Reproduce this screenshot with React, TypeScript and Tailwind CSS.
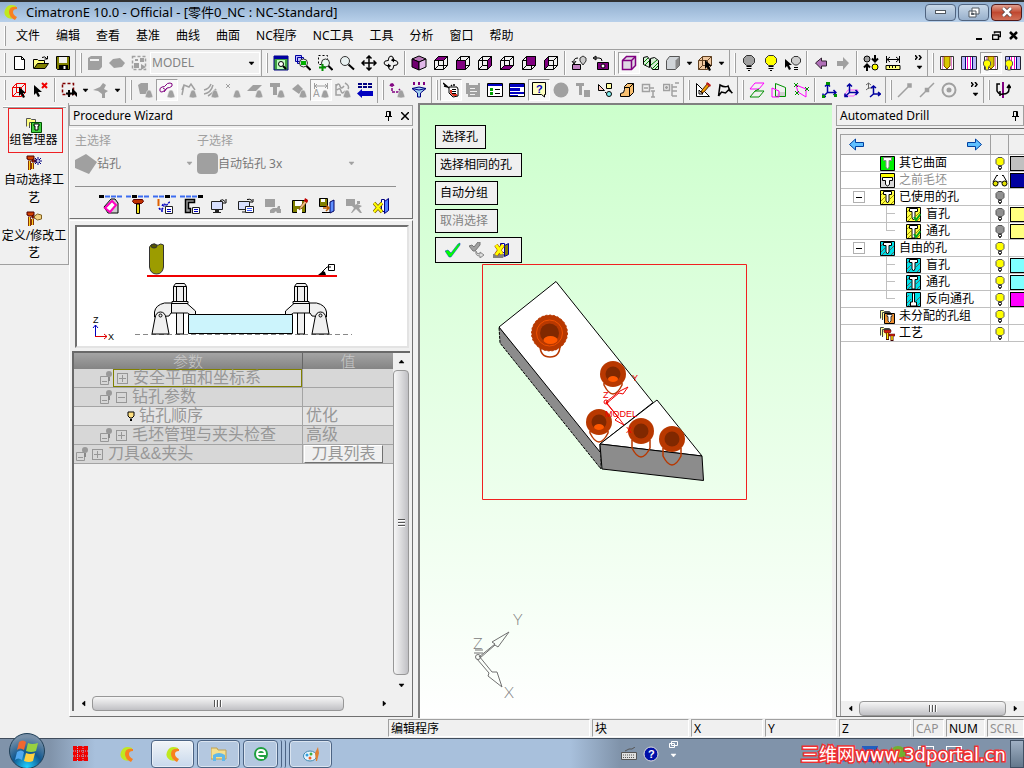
import React from 'react';

const G = '#a0a0a0';
const P = '#800080';

const cubeEdges = 'M1.5 5.5h9v9h-9zM5.5 1.5h9v9h-9zM1.5 5.5l4-4M10.5 5.5l4-4M10.5 14.5l4-4M1.5 14.5l4-4';
const cursor = <path d="M8 5v9l2-2 2 4 2-1-2-4h3z" fill="#000" />;
const cone = <path d="M8 15l2-6q2-2 4 0l2 6q-4 2-8 0z" fill={G} stroke="#f0f0f0" strokeWidth="0.500" />;
const glass = (
  <>
    <circle cx="8.500" cy="8" r="4" fill="#e8f8f0" stroke="#333" />
    <path d="M11.500 11l4 4" stroke="#000" strokeWidth="2" />
  </>
);

const Cube = ({ face }: { face: string }) => (
  <>
    <path d={cubeEdges} fill="none" stroke="#000" />
    <path d={face} fill={P} stroke="#000" />
  </>
);

const Bulb = ({ fill }: { fill: string }) => (
  <>
    <path d="M5.500 10.500L2.500 7.500V3.500L5.500.500h5l3 3v4l-3 3z" fill={fill} stroke="#333" />
    <path d="M5.500 11.500h5M5.500 13.500h5M7 15.500h2" stroke="#000" />
  </>
);

const Triad = ({ color }: { color: string }) => (
  <path d="M6.500 10.500V2M4 4.500L6.500 2 9 4.500M6.500 10.500H15M12.500 8l2.500 2.500-2.500 2.500M6.500 10.500L2 14.500M2 11.500v3h3" fill="none" stroke={color} strokeWidth="1.500" />
);

const Hole = ({ bulb }: { bulb?: boolean }) => (
  <>
    <path d="M1.500 1.500h13v13h-13z" fill="#fff" stroke="#333" />
    <path d="M3.500 2v12M12.500 2v12" stroke="#e080d0" />
    <path d="M5 1.500h6V11l-3 3-3-3z" fill="#d8c800" stroke="#804000" />
    {bulb && <path d="M.5 7l2-2h3l2 2v3l-2 2v3h-3v-3l-2-2z" fill="#ffff00" stroke="#555" />}
  </>
);

const Slot = ({ bulb }: { bulb?: boolean }) => (
  <>
    <path d="M.5 1.500h15v13H.5z" fill="#b8b8f8" stroke="#223" />
    <path d="M4 2h8v12H4z" fill="#fff" />
    <path d="M4.500 2v12M11.500 2v12" stroke="#000080" />
    <path d="M6.500 2v12M9.500 2v12" stroke="#ff00c0" />
    {bulb && <path d="M.5 7l2-2h3l2 2v3l-2 2v3h-3v-3l-2-2z" fill="#ffff00" stroke="#555" />}
  </>
);

const drawings: Record<string, React.ReactNode> = {
  new: <path d="M3.500 1.500h7l3 3v10h-10zM10.500 1.500v3h3" fill="#fff" stroke="#000" />,
  open: (
    <>
      <path d="M.5 13.500v-9h4l1 1h6v3" fill="#ffff80" stroke="#000" />
      <path d="M1 13.500l3.500-5h11L12 13.500z" fill="#808000" stroke="#000" />
      <path d="M9 2.500q3-2 5 1.500M14.500 1v3h-3" fill="none" stroke="#000" />
    </>
  ),
  save: (
    <>
      <path d="M1.500 1.500h13v13h-12l-1-1z" fill="#808000" stroke="#000" />
      <path d="M4 2h8v6H4z" fill="#f0f0f0" />
      <path d="M4 10h9v4H4z" fill="#000" />
      <path d="M9.500 11v3" stroke="#fff" strokeWidth="2" />
    </>
  ),
  part: <path d="M1 3l3-2h11v11l-3 3H1zM3 4h9v2H3z" fill={G} fillRule="evenodd" />,
  stock: <path d="M0 8l4-4 7-1 5 5-3 4-8 1z" fill={G} />,
  assembly: (
    <>
      <path d="M1.500 1.500h13v13h-13z" fill="none" stroke={G} strokeWidth="1.500" strokeDasharray="3 2" />
      <path d="M3 8h5v5H3zM9 3h4v4H9zM10 9l5 3-5 3zM4 4h3v2H4z" fill={G} />
    </>
  ),
  fitWindow: (
    <>
      <path d="M1 1h14v14H1z" fill="#40a040" stroke="#000080" />
      <path d="M1 1h14v3H1z" fill="#0000a0" />
      <path d="M4 5h8v9H4z" fill="#c0ffc0" />
      <circle cx="8" cy="9" r="2.500" fill="#fff" stroke="#000" />
      <path d="M10 11l3 3" stroke="#000" strokeWidth="2" />
    </>
  ),
  zoomDrag: (
    <>
      <path d="M.5.5h6v6h-6zM2.500 2.500h6v6h-6z" fill="#c0c0ff" stroke="#0000a0" />
      {glass}
      <path d="M6 6h5v4H6z" fill="#00b000" />
    </>
  ),
  zoomArea: (
    <>
      <path d="M1.500.500h9v9h-9z" fill="none" stroke="#000" strokeDasharray="2 2" />
      {glass}
      <path d="M5.500 9v7M2 12.500h7" stroke="#009000" strokeWidth="2" />
    </>
  ),
  zoom: (
    <>
      <circle cx="6" cy="6" r="4.500" fill="#e8f0f0" stroke="#333" />
      <path d="M9.500 9.500l5.500 5" stroke="#000" strokeWidth="2" />
    </>
  ),
  pan: <path d="M8 1v14M1 8h14M5.500 3.500L8 1l2.500 2.500M5.500 12.500L8 15l2.500-2.500M3.500 5.500L1 8l2.500 2.500M12.500 5.500L15 8l-2.500 2.500" fill="none" stroke="#000" strokeWidth="1.500" />,
  rotate: (
    <>
      <path d="M5 5.500q-4 0-4 2.500t5 3M11 10.500q4 0 4-2.500t-5-3M5.500 11q0 4 2.500 4t3-5M10.500 5q0-4-2.500-4t-3 5" fill="none" stroke="#000" />
      <path d="M5 8.500l3 2.500-3 2zM11 7.500L8 5l3-2zM8 6l3-2 2 2zM8 10l-3 2-2-2z" />
    </>
  ),
  iso: (
    <>
      <path d="M1 4l7-3 7 3-7 3z" fill="#b878b8" stroke="#000" />
      <path d="M1 4l7 3v8l-7-3z" fill="#700070" stroke="#000" />
      <path d="M15 4L8 7v8l7-3z" fill="#e0b8e8" stroke="#000" />
    </>
  ),
  top: <Cube face="M1.500 5.500l4-4h9l-4 4z" />,
  front: <Cube face="M1.500 5.500h9v9h-9z" />,
  right: <Cube face="M10.500 5.500l4-4v9l-4 4z" />,
  bottom: <Cube face="M1.500 14.500l4-4h9l-4 4z" />,
  back: <Cube face="M5.500 1.500h9v9h-9z" />,
  left: <Cube face="M1.500 5.500l4-4v9l-4 4z" />,
  turnView: (
    <>
      <path d="M1.500 9.500h8v5h-8z" fill="#c080c0" stroke="#000" />
      <path d="M9 3l3-2 3 2v3l-3 4-3-4z" fill="#ccc" stroke="#333" />
      <path d="M3 8q-1-5 4-5M1 6l2 3 2-3" fill="none" stroke="#000" />
    </>
  ),
  snapshot: (
    <>
      <path d="M4.500 7.500h11v7h-11z" fill={P} stroke="#000" />
      <circle cx="10" cy="11" r="2" fill="#fff" stroke="#000" />
      <path d="M1 3h5q3 0 3 3M3 1L0 3l3 2z" fill="none" stroke="#000" />
    </>
  ),
  shaded: (
    <>
      <path d="M1.500 5.500l4-4h9v9l-4 4h-9z" fill="#e0d8e4" stroke={P} strokeWidth="1.500" />
      <path d="M1.500 5.500h9v9M10.500 5.500l4-4" fill="none" stroke={P} strokeWidth="1.500" />
    </>
  ),
  section: (
    <>
      <path d="M.5 2.500l4-1 2 3v8l-2-1-4-2zM15.500 14.500v-9l-4-3-4 1v8l2 3z" fill="#d8f0d8" stroke="#000" />
      <path d="M9 14l6-6M8 10l6-5M12 14l3-3M1 7l4-4M2 10l4-4" stroke="#008000" />
    </>
  ),
  solid: (
    <>
      <path d="M1.500 5.500l3-4h10v9l-4 4h-9z" fill="#d0d4d8" stroke="#555" />
      <path d="M10.500 5.500l4-4v9l-4 4z" fill="#888" />
    </>
  ),
  wirePick: (
    <>
      <path d="M1.500 5.500l4-4h9v9l-4 4h-9z" fill="#f0c8a0" />
      <path d={cubeEdges} fill="none" stroke="#604020" />
      {cursor}
    </>
  ),
  bulbOff: <Bulb fill={G} />,
  bulbOn: <Bulb fill="#ffff00" />,
  bulbPick: (
    <>
      <path d="M0 4v9l2-2 2 4 2-1-2-4h3z" fill="#000" />
      <path d="M8.500 9l-2-2V4L9 1.500h4L15.500 4v3l-3 3h-3z" fill="#ccc" stroke="#333" />
      <path d="M9 12.500h4M9 14.500h4" stroke="#000" />
    </>
  ),
  prev: <path d="M2.500 8l6-5v3h5v5h-5v3z" fill="#b070b8" stroke="#302030" />,
  next: <path d="M14 8L8 2v4H2v5h6v4z" fill={G} />,
  swap: (
    <>
      <circle cx="4" cy="4" r="3" fill={G} stroke="#000" />
      <circle cx="12" cy="12" r="3" fill="#ffff00" stroke="#000" />
      <path d="M12 0v6M9 3.500l3 3 3-3M4 16v-6M1 12.500l3-3 3 3" stroke="#000" strokeWidth="2" fill="none" />
    </>
  ),
  measure: (
    <>
      <path d="M1.500 1v7M14.500 1v7M2 4.500h12M5 2L2 4.500 5 7M11 2l3 2.500L11 7" fill="none" stroke="#000" />
      <path d="M1 10.500h14v4H1z" fill="#ffff80" stroke="#000" />
      <path d="M4.500 11v2M7.500 11v2M10.500 11v2" stroke="#000" />
    </>
  ),
  hole1: <Hole />,
  hole2: <Slot />,
  hole3: <Hole bulb />,
  hole4: <Slot bulb />,
  boxPick: (
    <>
      <path d={cubeEdges} fill="none" stroke="#f00000" />
      {cursor}
    </>
  ),
  unpick: (
    <>
      <path d="M1 3v10l2-2 2 4 2-1-2-4h4z" fill="#000" />
      <path d="M9 1l5 5M14 1L9 6" stroke="#f00000" strokeWidth="2" />
    </>
  ),
  areaPick: (
    <>
      <path d="M1.500 1.500h11v11h-11z" fill="none" stroke="#800000" strokeWidth="1.500" strokeDasharray="3 2" />
      <path d="M8 8v7M5 11.500h6" stroke="#000" strokeWidth="2" />
      <path d="M11 6v8l2-2 3 3v-4z" fill="#000" />
    </>
  ),
  plug: <path d="M0 8l7-3 3-4 3 2-2 4 4 2-3 2v5H9v-4L5 9z" fill={G} />,
  gBox: <><path d="M1 3l3-2h7v8l-2 3H3z" fill={G} />{cone}</>,
  pCurve: (
    <>
      <path d="M1 9q-1-3 2-4 3 0 4-2t4-2q3 0 2 3-2 2-5 2-2 3-5 4-2 0-2-1M8 6l-3 4M4 6l3 2" fill="none" stroke={P} />
      {cone}
    </>
  ),
  gCurve: <><path d="M1 13L3 3l5 2 2-3 4 6M3 3l-2 5" fill="none" stroke={G} strokeWidth="1.500" />{cone}</>,
  gHatch: <><path d="M1 8q5-1 7-6M1 12q7-1 9-9M5 14q5-3 8-7" fill="none" stroke={G} strokeWidth="1.500" />{cone}</>,
  gPoint: <><path d="M1 2l4 4M5 2L1 6" stroke={G} />{cone}</>,
  gPlane: <><path d="M0 9l6-6h9L9 9z" fill={G} />{cone}</>,
  gTee: <><path d="M1 1h10v4H8v8H4V5H1z" fill={G} />{cone}</>,
  gGem: <><path d="M1 7l6-5 5 5-4 5z" fill={G} />{cone}</>,
  gDim: (
    <>
      <path d="M1.500 1v6M14.500 1v6M2 4h12M4 2L2 4l2 2M12 2l2 2-2 2" stroke={G} fill="none" />
      <text x="0" y="15" fontSize="10" fill={G} fontFamily="Liberation Sans">A</text>
      {cone}
    </>
  ),
  gWave: <><path d="M1 4q3-4 4 0t4 0M2 8q3-3 4 1t4 0M1 2v11h5M10 1q5 3 3 6" fill="none" stroke={G} strokeWidth="1.500" />{cone}</>,
  blueArrow: (
    <>
      <path d="M1 2h14M1 5h14" stroke="#000080" strokeWidth="2" strokeDasharray="4 1" />
      <path d="M0 11.500l5-4.500v2h11v5H5v2z" fill="#0000c0" />
    </>
  ),
  axisPick: (
    <>
      <path d="M3 2v8h9M1 4l2-3 2 3M10 7l2 3-2 3" fill="none" stroke={P} strokeWidth="1.500" strokeDasharray="3 1" />
      {cone}
    </>
  ),
  funnel: (
    <>
      <path d="M3 0v3M8 0v3M13 0v3" stroke={P} strokeWidth="2" />
      <path d="M1 6.500q7-3 14 0L9.500 11v4h-3v-4z" fill="#a0d0f0" stroke="#000080" />
      <path d="M1 6.500q7 3 14 0" fill="none" stroke="#000080" />
    </>
  ),
  guide: (
    <>
      <path d="M6 5h8l1 2v7l-5 1-4-4z" fill="#fff" stroke="#000" />
      <path d="M7 8h2v4h5v2h-4l-3-3z" fill="#e03020" />
      <path d="M0 1l6 5M1 4l4 1M8 3l1 1M11 2v2" stroke="#000" strokeWidth="1.500" />
      <path d="M9 7.500h4M9 9.500h4M9 11.500h4" stroke="#000" />
    </>
  ),
  gGuide: <path d="M1 1h3v2h9v-2h2v14H3v-3H1zM5 6h5v1H5zM5 9h7v1H5zM5 12h5v1H5z" fill={G} fillRule="evenodd" />,
  listWindow: (
    <>
      <path d="M.5 1.500h15v13H.5z" fill="#fff" stroke="#000" />
      <path d="M1 2h14v2H1z" fill="#0000c0" />
      <path d="M3 6h3v3H3zM3 10h3v3H3z" fill="#00a000" />
      <path d="M8 7.500h5M8 11.500h5" stroke="#000" />
    </>
  ),
  lines: (
    <>
      <path d="M.5 1.500h15v13H.5z" fill="#fff" stroke="#000" />
      <path d="M1 2h14v3H1zM1 6h10v3H1zM1 10h14v2H1zM1 13h8v1H1z" fill="#0000c0" />
    </>
  ),
  help: (
    <>
      <path d="M1.500.500h13v12h-1v2.500l-3-2.500h-9z" fill="#ffffc0" stroke="#000" />
      <text x="5" y="11" fontSize="11" fontWeight="bold" fill="#0000c0" fontFamily="Liberation Sans">?</text>
    </>
  ),
  disc: <circle cx="8" cy="8" r="7.500" fill={G} />,
  gTool: <path d="M1 1h8v3H7v9H4V4H1zM9 8h6v7H9z" fill={G} />,
  shapes: (
    <>
      <path d="M1.500 2.500v6h6zM8 10l2 2" fill="#ffd0c0" stroke="#000" />
      <path d="M9.500 1.500h5v5h-5z" fill="#ffffa0" stroke="#000" />
      <circle cx="12" cy="12" r="2.500" fill="#80f0f0" stroke="#000" />
    </>
  ),
  block: (
    <>
      <path d="M1.500 11.500q4 0 4-4v-3l3-3h6v9l-4 4h-9z" fill="#f8c070" stroke="#000" />
      <path d="M10.500 14V5.500l4-4M10.500 5.500h-5" fill="none" stroke="#000" />
    </>
  ),
  gTree1: <path d="M1.500 2.500h7v7h-7zM3 6h4M9 6h4M10 9h4M12 9v6M10 15h4" fill="none" stroke={G} strokeWidth="1.500" />,
  gTree2: <path d="M.5 2.500h6v6h-6zM2 5.500h3M3.500 4v3M9 2v12M9 5h5M9 9h5M9 14h5M12 1h4" fill="none" stroke={G} strokeWidth="1.500" />,
  sketch: (
    <>
      <path d="M1.500 1.500v13h13zM4 8v4h4z" fill="#fff" stroke="#000" />
      <path d="M6 11l1-3 6-7 2 2-6 7z" fill="#f0a000" stroke="#502000" />
      <path d="M12 0l4 3-1 2-4-3z" fill="#c02020" />
    </>
  ),
  contour: <path d="M1.500 14L3 3q5 3 8 1 1 4 4 7M1.500 14l3-4 4 1 3-3 4 3" fill="none" stroke="#000" strokeWidth="1.500" />,
  planes: (
    <>
      <path d="M1 7l5-6h9l-5 6z" fill="none" stroke="#ff00ff" />
      <path d="M1 15l5-6h9l-5 6z" fill="none" stroke="#009000" />
      <path d="M6 9l4-2" stroke="#009000" />
    </>
  ),
  planeFold: (
    <>
      <path d="M4.500 1.500l10 4v9h-10z" fill="none" stroke="#009000" />
      <path d="M5 14l3-4h6v4z" fill="#d0d0d0" />
      <path d="M1 6l7 3v6H1z" fill="none" stroke="#ff00ff" />
    </>
  ),
  planePts: (
    <>
      <path d="M3 3l10 4v8L5 10z" fill="none" stroke="#ff00ff" />
      <path d="M1 1l4 4M5 1L1 5M12 5l4 4M16 5l-4 4M2 9l4 4M6 9l-4 4" stroke="#009000" />
    </>
  ),
  ucs1: (
    <>
      <Triad color="#0000a0" />
      <path d="M5 0h4v3H5zM1 13h3v3H1zM13 12h3v3h-3z" fill="#009000" />
    </>
  ),
  ucs2: (
    <>
      <path d="M1 14l4-6h10l-4 6z" fill="none" stroke="#ff60ff" />
      <Triad color="#0000a0" />
    </>
  ),
  ucs3: (
    <>
      <path d="M3.500 7V1M1 3l2.500-2L6 3M3.500 6H8M1 8l2.500-2" stroke="#666" fill="none" />
      <path d="M8.500 12V4M6 6l2.500-2L11 6M8.500 12H15M13 10l2.500 2-2.500 2M8.500 12L5 15" stroke="#0000a0" strokeWidth="1.500" fill="none" />
    </>
  ),
  gLine: <path d="M1 15L12 4M11 2h3v3h-3z" stroke={G} strokeWidth="1.500" fill={G} />,
  gMid: <path d="M1 15L15 1M6.500 6.500h3v3h-3z" stroke={G} strokeWidth="1.500" fill={G} />,
  gCenter: (
    <>
      <circle cx="8" cy="8" r="6.500" fill="none" stroke={G} strokeWidth="2" />
      <circle cx="8" cy="8" r="2.500" fill={G} />
    </>
  ),
  spin: (
    <>
      <path d="M8 0v16" stroke={P} strokeWidth="2" />
      <path d="M5 2H2v7q2 4 6 3 6 0 6-5V4M12 6l2-3 2 3M5 9v5" fill="none" stroke="#000" strokeWidth="1.500" />
    </>
  ),
  // wizard row
  geometry: (
    <>
      <path d="M1 9l7-8h4l3 4v10H5z" fill="#ccc" stroke="#000" />
      <path d="M2 10l7-7 4 4-6 7z" fill="#fff" stroke="#ff00c0" strokeWidth="2" />
    </>
  ),
  cutter: (
    <>
      <path d="M3.500 1.500h9l1 2-2 2h-7l-2-2z" fill="#c03000" stroke="#600000" />
      <path d="M6.500 6h3v9.500h-3z" fill="#f0e020" stroke="#000" />
    </>
  ),
  motion: (
    <>
      <path d="M1.500 1v7" stroke="#e06000" strokeWidth="2" />
      <path d="M2 10q2 3 4 0t-1-2q2-4 4 0 3-4 4-4M4 13h3" fill="none" stroke="#0000c0" strokeDasharray="2 1" strokeWidth="1.500" />
      <path d="M8.500 8.500h7v7h-7z" fill="#fff" stroke="#222" />
      <path d="M10 11.500h4M10 13.500h4" stroke="#0000c0" />
    </>
  ),
  machine: (
    <>
      <path d="M10.500 4.500v-3h-9v13h5v-4h-2v-6z" fill="#999" stroke="#000" strokeWidth="1.500" />
      <path d="M8.500 9.500h7v6h-7z" fill="#fff" stroke="#222" />
      <path d="M10 11.500h4M10 13.500h4" stroke="#0000c0" />
    </>
  ),
  screen: (
    <>
      <path d="M.5 3.500h11v8H.5z" fill="#d8e0ff" stroke="#222" />
      <path d="M4 12h4v2h2v1H2v-1h2z" fill="#222" />
      <path d="M9 2.500q3-2 5 1M15 1v4h-3" fill="none" stroke="#000" />
    </>
  ),
  screenList: (
    <>
      <path d="M.5 3.500h11v8H.5zM4 14h5" fill="#d8e0ff" stroke="#222" />
      <path d="M9 1.500q3-1 5 1M15 1v3h-3" fill="none" stroke="#000" />
      <path d="M7.500 8.500h8v6h-8z" fill="#fff" stroke="#222" />
      <path d="M9 10.500h5M9 12.500h5" stroke="#4060ff" />
    </>
  ),
  gRun: <path d="M0 1h10v8H0zM8 10h4l1-2h2v3h1v4h-4l-1-2-2 2H5v-3z" fill={G} />,
  saveEdit: (
    <>
      <path d="M.5 2.500h13v12H.5z" fill="#808000" stroke="#000" />
      <path d="M3 3h7v5H3zM5 11h5v4H5z" fill="#fff" />
      <path d="M7 12l1-3 6-8 2 2-6 7z" fill="#f0c080" stroke="#602000" strokeWidth="0.500" />
      <path d="M13 0l3 2-1 3-3-2z" fill="#c00000" />
    </>
  ),
  saveExit: (
    <>
      <path d="M.5.500h8v8h-8z" fill="#808000" stroke="#000" />
      <path d="M2 1h4v3H2z" fill="#fff" />
      <path d="M11 4l4-2v11l-4 2z" fill="#6090ff" stroke="#000060" />
      <path d="M4 10h6M7 7l3 3-3 3" stroke="#c06000" fill="none" strokeWidth="1.500" />
      <path d="M3 14.500h8" stroke="#000" />
    </>
  ),
  gRunner: <path d="M0 1h9v7H0zM11 3h3v3h-3zM6 8l5-2 5 2-3 2 3 5h-2l-4-4-4 4H5l3-5z" fill={G} />,
  exit: (
    <>
      <path d="M8.500 1.500h3v12h-3z" fill="#fff" stroke="#000080" />
      <path d="M11.500 3.500l4-3v12l-4 3z" fill="#5080ff" stroke="#000080" />
      <path d="M1 5l8 9M9 5l-8 9" stroke="#806000" strokeWidth="3.500" />
      <path d="M1 5l8 9M9 5l-8 9" stroke="#ffff00" strokeWidth="2" />
    </>
  ),
  // sidebar
  groups: (
    <>
      <path d="M.5 9.500v-8h4l1 1h4v4" fill="#ffff80" stroke="#555" />
      <path d="M3.500 11V5.500h6" fill="none" stroke="#555" />
      <path d="M5.500 5.500h10v10h-10z" fill="#40d040" stroke="#005000" />
      <path d="M8 7h5v2h-1v4H9V9H8z" fill="#fff" stroke="#000" />
    </>
  ),
  autoTool: (
    <>
      <path d="M1 1h7v3H7v1H2V4H1zM6 5h4v2H6z" fill="#d04000" stroke="#500000" />
      <path d="M3.500 6v9M6.500 8v6" stroke="#600000" strokeWidth="3" />
      <path d="M3.500 6v9M6.500 8v6" stroke="#ffd020" strokeWidth="1.500" />
      <path d="M12 2v8M8 6h8M9 3l6 6M15 3L9 9" stroke="#000080" />
      <circle cx="12" cy="6" r="1" fill="#fff" />
    </>
  ),
  editTool: (
    <>
      <path d="M1 1h7v3H7v1H2V4H1zM6 5h4v2H6z" fill="#d04000" stroke="#500000" />
      <path d="M3.500 6v9M6.500 8v6" stroke="#600000" strokeWidth="3" />
      <path d="M3.500 6v9M6.500 8v6" stroke="#ffd020" strokeWidth="1.500" />
      <path d="M8.500 5l3-2 4 1v4l-4 1-3-2z" fill="#f0d080" stroke="#806020" />
    </>
  ),
  ok: <path d="M0 9l3-1 3 3 7-9 2-1v2L6 15H4z" fill="#00ff00" stroke="#0040c0" strokeWidth="0.500" />,
  gApply: (
    <>
      <path d="M0 4l3-1 2 2 4-5h2v3L6 9H4z" fill={G} stroke="#777" />
      <path d="M7 9q0 3 4 3v-2l4 3-4 3v-2q-5 0-4-5z" fill="#ddd" stroke="#888" />
    </>
  ),
  cancel: (
    <>
      <path d="M0 12h12l-2 4H0z" fill="#808080" />
      <path d="M7.500 1.500h4v9h-4z" fill="#fff" stroke="#0000a0" />
      <path d="M11.500 3.500l4-2v11l-4 2z" fill="#808000" stroke="#0000a0" />
      <path d="M3 3l6 9M10 3L3 13" stroke="#a04000" strokeWidth="4" />
      <path d="M3 3l6 9M10 3L3 13" stroke="#ffff00" strokeWidth="3" />
    </>
  ),
};

const Icon = ({ name, className = 'size-4' }: { name: string; className?: string }) => (
  <svg viewBox="0 0 16 16" className={`${className} shrink-0`} aria-hidden="true">
    {drawings[name]}
  </svg>
);

// '|' separator, 'v' drop-down arrow, '>>' overflow, '*' pressed, 'select' the model list
const topBar: string[][] = [
  ['new', 'open', 'save'],
  ['part', 'stock', 'assembly', 'select'],
  ['fitWindow', 'zoomDrag', 'zoomArea', 'zoom', 'pan', 'rotate', '|', 'iso', 'top', 'front', 'right', 'bottom', 'back', 'left', '|', 'turnView', 'snapshot', '|', '*shaded', 'section', 'solid', 'v', 'wirePick', 'v'],
  ['bulbOff', 'bulbOn', 'bulbPick', '|', 'prev', 'next', '|', 'swap', 'measure', '>>'],
  ['hole1', 'hole2', '*hole3', 'hole4'],
];

const lowBar: string[][] = [
  ['boxPick', 'unpick', '|', 'areaPick', 'v', 'plug', 'v'],
  ['gBox', '*pCurve', 'gCurve', 'gHatch', 'gPoint', 'gPlane', 'gTee', 'gGem', '*gDim', 'gWave', 'blueArrow'],
  ['axisPick', 'funnel'],
  ['*guide', 'gGuide', 'listWindow', 'lines', '*help', 'disc', 'gTool', 'shapes', 'block', 'gTree1', 'gTree2'],
  ['sketch', 'contour'],
  ['planes', 'planeFold', 'planePts', '|', 'ucs1', 'ucs2', 'ucs3'],
  ['gLine', 'gMid', 'gCenter', '>>'],
  ['spin', '>>'],
];

const Arrow = ({ dir = 'down', color = '#000' }: { dir?: 'down' | 'up' | 'left' | 'right'; color?: string }) => {
  const d = { down: 'M1 2h5L3.500 5z', up: 'M1 5h5L3.500 2z', left: 'M5 1v5L2 3.500z', right: 'M2 1v5l3-2.500z' }[dir];
  return (
    <svg viewBox="0 0 7 7" className="size-[7px] shrink-0" aria-hidden="true">
      <path d={d} fill={color} stroke={color} strokeWidth="0.500" />
    </svg>
  );
};

const ToolItem = ({ id }: { id: string }) => {
  if (id === '|') return <span className="mx-[2px] h-6 w-[2px] shrink-0 border-l border-[#a0a0a0] bg-white" />;
  if (id === 'v') return <button aria-label="More options" className="flex h-6 w-[10px] shrink-0 items-center justify-center"><Arrow /></button>;
  if (id === 'select')
    return (
      <div className="grid h-[22px] w-[110px] shrink-0 items-center border border-white">
        <select aria-label="Active UCS" className="col-start-1 row-start-1 appearance-none bg-transparent pl-px text-xs text-[#838383]">
          <option>MODEL</option>
        </select>
        <span className="pointer-events-none col-start-1 row-start-1 mr-1 justify-self-end"><Arrow /></span>
      </div>
    );
  if (id === '>>')
    return (
      <button aria-label="Toolbar overflow" className="flex h-6 w-[22px] shrink-0 flex-col items-center justify-between py-1 pl-2">
        <svg viewBox="0 0 8 5" className="h-[5px] w-2"><path d="M0 0l2 2.500L0 5M4 0l2 2.500L4 5" fill="none" stroke="#000" strokeWidth="1.500" /></svg>
        <Arrow />
      </button>
    );
  const pressed = id.startsWith('*');
  const name = pressed ? id.slice(1) : id;
  return (
    <button
      aria-label={name}
      className={`flex h-[22px] w-[22px] shrink-0 items-center justify-center ${pressed ? 'border border-r-white border-b-white border-t-[#a0a0a0] border-l-[#a0a0a0] bg-[#f8f8f8]' : ''}`}
    >
      <Icon name={name} />
    </button>
  );
};

const ToolBar = ({ groups }: { groups: string[][] }) => (
  <div role="toolbar" className="flex h-[27px] shrink-0 overflow-hidden border-t border-[#a0a0a0]">
    {groups.map((group, i) => (
      <div key={i} className={`flex shrink-0 items-center border-r border-[#a0a0a0] ${group.includes('v') ? 'pr-[3px]' : 'pr-px'}`}>
        <span className="mr-[2px] ml-1 h-5 w-[2px] border-r border-[#a0a0a0] bg-white" />
        {group.map((id, j) => <ToolItem key={j} id={id} />)}
      </div>
    ))}
  </div>
);

const HScroll = ({ thumb }: { thumb: string }) => (
  <div className="flex h-[15px] items-stretch bg-[#f0f0f0]">
    <button aria-label="Scroll left" className="flex w-[18px] shrink-0 items-center justify-center"><Arrow dir="left" /></button>
    <div className="flex-1">
      <div className={`flex h-full items-center justify-center gap-px rounded-sm border border-[#979797] bg-gradient-to-b from-[#f6f6f6] via-[#dcdcde] to-[#c0c0c4] ${thumb}`}>
        {[0, 1, 2].map(n => <span key={n} className="h-[7px] w-[2px] border-r border-white bg-[#555]" />)}
      </div>
    </div>
    <button aria-label="Scroll right" className="flex w-[18px] shrink-0 items-center justify-center"><Arrow dir="right" /></button>
  </div>
);

const VScroll = () => (
  <div className="flex w-4 shrink-0 flex-col bg-[#f0f0f0]">
    <button aria-label="Scroll up" className="flex h-[17px] items-center justify-center"><Arrow dir="up" /></button>
    <div className="flex flex-1 flex-col items-center justify-center gap-px rounded-sm border border-[#979797] bg-gradient-to-r from-[#f6f6f6] via-[#dcdcde] to-[#c0c0c4]">
      {[0, 1, 2].map(n => <span key={n} className="h-[2px] w-[7px] border-b border-white bg-[#555]" />)}
    </div>
    <button aria-label="Scroll down" className="flex h-5 items-center justify-center"><Arrow /></button>
  </div>
);

const Pin = () => (
  <svg viewBox="0 0 9 10" className="h-[10px] w-[9px]" aria-hidden="true">
    <path d="M2.500 5.500v-5h4v5M1 5.500h7M4.500 6v4M5.500 1v4" fill="none" stroke="#000" />
  </svg>
);

const PanelTitle = ({ title, closable }: { title: string; closable?: boolean }) => (
  <div className="flex h-[21px] items-center gap-2 border border-[#a0a0a0] px-[3px]">
    <h2 className="flex-1 text-xs whitespace-nowrap">{title}</h2>
    <button aria-label="Pin panel"><Pin /></button>
    {closable && (
      <button aria-label="Close panel">
        <svg viewBox="0 0 8 8" className="size-2"><path d="M0 0l8 8M8 0L0 8" stroke="#000" strokeWidth="1.500" /></svg>
      </button>
    )}
  </div>
);

const SideBar = () => (
  <aside className="w-[69px] shrink-0">
    <div className="border-r border-b border-[#a0a0a0] pt-[3px] pb-[3px]">
      <div className="mr-[2px] ml-[3px] h-[2px] border-b border-[#a0a0a0] bg-white" />
      <button className="ml-2 flex h-[45px] w-[55px] flex-col items-center border border-[#ee2024] pt-2 pr-1 leading-[14px] whitespace-nowrap">
        <Icon name="groups" />组管理器
      </button>
      <button className="flex w-full flex-col items-center pt-[2px] text-center leading-[18px]">
        <Icon name="autoTool" />自动选择工艺
      </button>
      <button className="flex w-full flex-col items-center pt-1 text-center leading-[17px] break-all">
        <Icon name="editTool" />定义/修改工艺
      </button>
    </div>
  </aside>
);

const Clamp = () => (
  <g fill="#f0f0f0" stroke="#000">
    <path d="M99.500 85h7v22h-7zM96.500 59.500l2-3h9l2 3v15h-13zM99.500 59v15M106.500 59v15M96.500 59.500h13" />
    <path d="M77.500 90v-5q1-7 10-9h22l9 8v4h-5l-3-2H94l-2 3z" />
    <path d="M94.500 76v10M95 74.500h16v2H95z" />
    <path d="M75 107l3-16q1-6 5.500-6t5.500 6l3 16z" />
    <circle cx="83.500" cy="88.500" r="1.500" />
  </g>
);

const SetupDrawing = () => (
  <svg className="h-[119px] w-full" aria-label="Clearance setup">
    <path d="M72.500 20v20q1 7 7 7t7-7V18q-3-2-5 0-2 1-4-1-4 0-5 3z" fill="#9c9c00" stroke="#333" />
    <ellipse cx="77" cy="19" rx="3" ry="2" fill="#555500" stroke="#333" />
    <path d="M58 107.500h217" stroke="#888" strokeDasharray="5 3" />
    <Clamp />
    <g transform="translate(327 0) scale(-1 1)"><Clamp /></g>
    <path d="M111.500 87.500h104v19h-104z" fill="#ccf4fc" stroke="#000" />
    <path d="M70 49h190" stroke="#f00000" strokeWidth="2" />
    <path d="M241 48l5-4 2 1 1 3z" />
    <path d="M245 45l5-5h4M251.500 37.500h6v6h-6z" fill="none" stroke="#000" />
    <path d="M18.500 98v12M16 101l2.500-3 2.500 3" fill="none" stroke="#0000c0" />
    <path d="M18 109.500h12M27 107l3 2.500-3 2.500" fill="none" stroke="#e00000" />
    <text x="16" y="96" fontSize="9" fontFamily="Liberation Sans">Z</text>
    <text x="31" y="113" fontSize="9" fontFamily="Liberation Sans">X</text>
  </svg>
);

const wizardTools = ['geometry', 'cutter', 'motion', 'machine', 'screen', 'screenList', 'gRun', 'saveEdit', 'saveExit', 'gRunner', 'exit'];

type Param = { label: string; value?: string; level: number; mark?: '+' | '-'; active?: boolean; list?: boolean };
const params: Param[] = [
  { label: '安全平面和坐标系', level: 1, mark: '+', active: true },
  { label: '钻孔参数', level: 1, mark: '-' },
  { label: '钻孔顺序', level: 2, value: '优化' },
  { label: '毛坯管理与夹头检查', level: 1, mark: '+', value: '高级' },
  { label: '刀具&&夹头', level: 0, mark: '+', value: '刀具列表', list: true },
];

const ParamTable = () => (
  <table className="w-full table-fixed border-separate border-spacing-0 font-['Liberation_Sans','Noto_Sans_CJK_SC',sans-serif] text-base leading-[18px] text-[#979797]">
    <thead>
      <tr className="h-4 bg-gradient-to-b from-[#a4a4a4] to-[#848484] text-[#c8c8c8]">
        <th className="w-[229px] border-r border-[#666] p-0 text-[15px] leading-[15px] font-light">参数</th>
        <th className="p-0 text-[15px] leading-[15px] font-light">值</th>
      </tr>
    </thead>
    <tbody>
      {params.map(p => (
        <tr key={p.label} className={p.level === 2 ? 'bg-[#e5e5e5]' : 'bg-[#d7d7d7]'}>
          <td className="h-[19px] border-r border-b border-[#a4a4a4] p-0">
            <div className={`flex h-[18px] items-center ${p.level === 0 ? 'pl-[2px]' : p.level === 1 ? 'pl-[26px]' : 'pl-[53px]'}`}>
              {p.level === 2 ? (
                <svg viewBox="0 0 8 10" className="mr-1 h-[10px] w-2 shrink-0"><path d="M1 1h6v4L5 7H3L1 5z" fill="#ffe080" stroke="#000" /><path d="M3 8h2v2H3z" /></svg>
              ) : (
                <svg viewBox="0 0 13 16" className="h-4 w-[13px] shrink-0">
                  <path d="M.5 6.500h8v8h-8zM2 11.500h5" fill="none" stroke="#979797" />
                  <circle cx="9" cy="4" r="3" fill="#999" /><path d="M9 7v4" stroke="#888" strokeWidth="2" />
                </svg>
              )}
              <div className={`flex h-[18px] flex-1 items-center whitespace-nowrap ${p.active ? 'border border-[#808000] pl-[3px]' : p.mark ? 'pl-[3px]' : ''}`}>
                {p.mark && (
                  <button aria-label="Toggle" className="mr-[5px] flex size-[11px] items-center justify-center border border-[#979797]">
                    <svg viewBox="0 0 7 7" className="size-[7px]"><path d={p.mark === '+' ? 'M0 3.500h7M3.500 0v7' : 'M0 3.500h7'} stroke="#979797" /></svg>
                  </button>
                )}
                {p.label}
              </div>
            </div>
          </td>
          <td className="border-b border-[#a4a4a4] p-0 pl-[3px] whitespace-nowrap">
            {p.list ? (
              <button className="-ml-[2px] block h-[18px] w-[79px] border border-white border-r-[#707070] border-b-[#707070] bg-[#f0f0f0] leading-4">{p.value}</button>
            ) : p.value}
          </td>
        </tr>
      ))}
    </tbody>
  </table>
);

const Wizard = () => (
  <section className="flex w-[345px] shrink-0 flex-col pt-[2px] pr-px">
    <PanelTitle title="Procedure Wizard" closable />
    <div className="mt-[2px] h-[91px] border border-t-white border-l-white border-r-[#707070] border-b-[#707070] pt-[5px] pl-[5px]">
      <div className="flex leading-[14px] text-[#a0a0a0]">
        <span className="w-[122px]">主选择</span>
        <span>子选择</span>
      </div>
      <div className="mt-1 flex h-[23px] items-center text-[#787878]">
        <button className="flex w-[122px] items-center pr-1">
          <svg viewBox="0 0 22 20" className="h-5 w-[22px]"><path d="M0 6l11-6 11 8-8 12L0 14z" fill="#a0a0a0" /></svg>
          <span className="flex-1 text-left">钻孔</span>
          <Arrow color="#a0a0a0" />
        </button>
        <button className="flex w-[158px] items-center">
          <span className="size-[21px] rounded-sm bg-[#a0a0a0]" />
          <span className="flex-1 text-left whitespace-nowrap">自动钻孔 3x</span>
          <Arrow color="#a0a0a0" />
        </button>
      </div>
      <div className="mt-[11px] mr-4 border-t border-[#909090]" />
      <svg viewBox="0 0 104 3" className="mt-2 ml-6 block h-[3px] w-[104px]" aria-hidden="true">
        <path d="M0 1.500h23M27 1.500h23M54 1.500h23M81 1.500h23" stroke="#3c6cf0" strokeWidth="2" strokeDasharray="5 1" />
        <path d="M0 1.500h5M33 1.500h5M66 1.500h5M99 1.500h5" stroke="#000" strokeWidth="3" />
      </svg>
      <div className="ml-[22px] flex">
        {wizardTools.map(t => (
          <button key={t} aria-label={t} className="flex h-4 w-[27px] items-center justify-center"><Icon name={t} /></button>
        ))}
      </div>
    </div>
    <div className="mt-px mb-px flex min-h-0 flex-1 flex-col border border-white border-r-[#707070] border-b-[#707070] px-[2px] pt-1 pb-[5px]">
      <div className="mr-px ml-[3px] border-2 border-t-[#707070] border-l-[#707070] border-r-[#e3e3e3] border-b-[#e3e3e3] bg-white">
        <SetupDrawing />
      </div>
      <div className="mt-[3px] flex min-h-0 flex-1 border-t-2 border-l-2 border-[#696969]">
        <div className="flex min-w-0 flex-1 flex-col">
          <div className="flex-1"><ParamTable /></div>
          <HScroll thumb="w-[89%]" />
        </div>
        <div className="mr-px flex flex-col pb-4"><div className="flex flex-1"><VScroll /></div></div>
      </div>
    </div>
  </section>
);

const Bore = ({ x, y, drop, r = 13 }: { x: number; y: number; drop: number; r?: number }) => (
  <g>
    <path d={`M${x - 9} ${y + 9}v${drop - 18}q9 ${18} 18 0v-${drop - 18}`} fill="none" stroke="#b83800" strokeWidth="1.500" />
    <circle cx={x} cy={y} r={r} fill="#b83800" />
    <circle cx={x} cy={y} r={r / 2 + 1} fill="#802800" />
  </g>
);

const Scene = () => (
  <svg className="absolute inset-0 h-full w-full" aria-label="Model view">
    <g transform="translate(-420 -105)" stroke="#000">
      <path d="M482.500 264.500h264v235h-264z" fill="none" stroke="#f02020" />
      <path d="M499 327l102 125v17L500 343z" fill="#8c8c8c" strokeDasharray="3 1" />
      <path d="M499 327l57-45.500 97 121-53 41.500v8z" fill="#fff" />
      <path d="M600 444l57-44 45 56z" fill="#fff" />
      <path d="M600 444l102 12 1.500 24.500L602 469z" fill="#8c8c8c" />
      <g stroke="none">
        <path d="M540 345q0 12 10 12t10-12" fill="#fff" stroke="#b83800" strokeWidth="1.500" />
        <circle cx="549.500" cy="333" r="18" fill="#b83800" stroke="#b83800" strokeDasharray="2 2" />
        <circle cx="549.500" cy="333" r="13" fill="none" stroke="#f05000" />
        <circle cx="549.500" cy="333" r="9.500" fill="#802800" />
        <ellipse cx="550.500" cy="340" rx="7" ry="4" fill="#ff5800" />
        <Bore x={613} y={374} drop={20} />
        <ellipse cx="613" cy="379" rx="5" ry="3" fill="#ff5800" />
        <Bore x={599} y={422} drop={20} />
        <ellipse cx="599" cy="427" rx="5" ry="3" fill="#ff5800" />
        <Bore x={641} y={431} drop={26} />
        <Bore x={672} y={439} drop={26} />
      </g>
      <g fill="none" stroke="#f00000">
        <path d="M606 402l14-11 8-4-5 7-4-1-12 10zM606 402l12 15 6 8-9-5 3-3-11-13z" />
        <circle cx="606" cy="402" r="2" />
      </g>
      <g fill="#f00000" stroke="none" fontSize="9" fontFamily="Liberation Sans">
        <text x="605" y="417">MODEL</text>
        <text x="632" y="381">Y</text>
        <text x="603" y="398">Z</text>
        <text x="626" y="433">X</text>
      </g>
      <g fill="none" stroke="#707070">
        <path d="M479 657l16-13-3-2 17-10-11 15-3-2-15 13M477 659l12 14-1 3 14 11-5-15-5 0-13-16" />
        <circle cx="478" cy="657" r="2.500" />
        <path d="M474 653h9M475 650h8" />
      </g>
      <g fill="#808080" stroke="none" fontSize="16" fontFamily="Lato" fontWeight="300">
        <text x="513" y="625">Y</text>
        <text x="473" y="649">Z</text>
        <text x="504" y="698">X</text>
      </g>
    </g>
  </svg>
);

const Viewport = () => (
  <main className="relative mr-1 ml-1 min-w-0 flex-1 border-t-2 border-l-2 border-[#808080] bg-gradient-to-b from-[#ccffcc] to-white">
    <Scene />
    <div className="relative flex flex-col items-start gap-1 pt-5 pl-[15px]">
      <button className="h-6 border border-black bg-[#f0f0f0] pr-[7px] pl-[6px]">选择孔</button>
      <button className="h-6 border border-black bg-[#f0f0f0] pr-[9px] pl-1">选择相同的孔</button>
      <button className="h-6 border border-black bg-[#f0f0f0] pr-[9px] pl-1">自动分组</button>
      <button disabled className="h-6 border border-black bg-[#f0f0f0] pr-[9px] pl-1 text-[#838383]">取消选择</button>
      <div className="flex h-[26px] items-center gap-2 border border-black bg-[#f0f0f0] pr-3 pl-[9px]">
        <button aria-label="OK"><Icon name="ok" /></button>
        <button aria-label="Apply"><Icon name="gApply" /></button>
        <button aria-label="Cancel"><Icon name="cancel" /></button>
      </div>
    </div>
  </main>
);

type Node = { label: string; kind: string; level: 1 | 2; open?: boolean; last?: boolean; lamp: 'on' | 'off' | 'glasses'; swatch?: string };
const nodes: Node[] = [
  { label: '其它曲面', kind: 'surface', level: 1, lamp: 'on', swatch: 'bg-[#c0c0c0]' },
  { label: '之前毛坯', kind: 'stock', level: 1, lamp: 'glasses', swatch: 'bg-[#0000a0]' },
  { label: '已使用的孔', kind: 'used', level: 1, open: true, lamp: 'off' },
  { label: '盲孔', kind: 'usedBlind', level: 2, lamp: 'off', swatch: 'bg-[#ffff80]' },
  { label: '通孔', kind: 'usedThrough', level: 2, last: true, lamp: 'off', swatch: 'bg-[#ffff80]' },
  { label: '自由的孔', kind: 'free', level: 1, open: true, lamp: 'on' },
  { label: '盲孔', kind: 'free', level: 2, lamp: 'on', swatch: 'bg-[#80ffff]' },
  { label: '通孔', kind: 'through', level: 2, lamp: 'on', swatch: 'bg-[#80ffff]' },
  { label: '反向通孔', kind: 'reverse', level: 2, last: true, lamp: 'on', swatch: 'bg-[#ff00ff]' },
  { label: '未分配的孔组', kind: 'groups', level: 1, lamp: 'on' },
  { label: '工艺', kind: 'process', level: 1, lamp: 'on' },
];

const NodeIcon = ({ kind }: { kind: string }) => {
  const used = kind.startsWith('used');
  const bg = kind === 'surface' ? '#00f000' : kind === 'stock' ? '#d8d8d8' : used ? '#ffff40' : '#00e0e8';
  const through = kind === 'through' || kind === 'usedThrough';
  if (kind === 'groups' || kind === 'process')
    return (
      <svg viewBox="0 0 15 15" className="size-[15px] shrink-0">
        <path d="M.5 9.500v-8h3l1 1h5v2M2.500 11V3.500h8v2" fill="#ffffa0" stroke="#444" />
        {kind === 'groups' ? (
          <>
            <path d="M4.500 4.500h10v10h-10z" fill="#f09030" stroke="#000" />
            <path d="M7 5.500h5v2h-1V12l-1.500 1.500L8 12V7.500H7z" fill="#fff" stroke="#333" />
          </>
        ) : (
          <>
            <path d="M4 4h7v2L10 7H5L4 6zM9 8h6v2H9z" fill="#d02010" stroke="#400000" strokeWidth="0.500" />
            <path d="M7.500 7v7M12 10v5" stroke="#400000" strokeWidth="3" />
            <path d="M7.500 7v6M12 10v4" stroke="#ffe000" strokeWidth="1.500" />
          </>
        )}
      </svg>
    );
  return (
    <svg viewBox="0 0 15 15" className="size-[15px] shrink-0">
      <path d="M.5.500h14v14H.5z" fill={bg} stroke="#000" />
      {kind !== 'surface' && kind !== 'stock' && <path d="M1 5l2-2M1 11l4-4M10 9l4-4M11 14l3-3M2 14l3-3" stroke={used ? '#a09000' : '#606060'} />}
      {kind === 'stock' && <path d="M1 1h13v3H1z" fill="#ffff00" />}
      {kind === 'reverse' ? (
        <path d="M6.500 1v9h-2v4h6v-4h-2V1z" fill="#fff" stroke="#000" />
      ) : (
        <path
          d={kind === 'stock' ? 'M2.500 4.500h10v3h-3v4L7.500 13l-2-1.500v-4h-3z' : through ? 'M3.500 1.500v3h2.500V14h3V4.500h2.500v-3z' : 'M3.500 1.500v3h2.500V11l1.500 2L9 11V4.500h2.500v-3z'}
          fill="#fff"
          stroke={kind === 'surface' ? '#888' : '#000'}
        />
      )}
      {(kind === 'usedBlind' || kind === 'usedThrough') && <path d="M8 10l2 3 4.500-6" fill="none" stroke="#00a020" strokeWidth="2" />}
    </svg>
  );
};

const Lamp = ({ state }: { state: Node['lamp'] }) => {
  if (state === 'glasses')
    return (
      <svg viewBox="0 0 16 14" className="mx-auto h-[14px] w-4">
        <path d="M1 9l4-7 1 1M15 9l-4-7-1 1M5 9.500q3-2 6 0" fill="none" stroke="#000" />
        <circle cx="3.500" cy="10.500" r="2.500" fill="#e0e000" stroke="#000" />
        <circle cx="12.500" cy="10.500" r="2.500" fill="#e0e000" stroke="#000" />
      </svg>
    );
  return (
    <svg viewBox="0 0 10 13" className="mx-auto h-[13px] w-[10px]">
      <path d="M3 8.500l-2-2v-4l2-2h4l2 2v4l-2 2z" fill={state === 'on' ? '#ffff00' : '#909090'} stroke="#555" />
      <path d="M3.500 9.500h3v2h-3zM4 12.500h2" fill="#fff" stroke="#333" />
    </svg>
  );
};

const BlueArrow = ({ flip }: { flip?: boolean }) => (
  <svg viewBox="0 0 15 13" className={`h-[13px] w-[15px] ${flip ? 'rotate-180' : ''}`}>
    <path d="M.5 6.500l6-5.500v3.500h8v4h-8V12z" fill="#60c0ff" stroke="#0040a0" />
  </svg>
);

const DrillPanel = () => (
  <section className="flex w-[188px] shrink-0 flex-col pt-[2px]">
    <PanelTitle title="Automated Drill" />
    <div className="mt-[2px] mb-px flex min-h-0 flex-1 flex-col border border-[#707070] border-r-0 pt-[5px] pl-[3px]">
      <div className="flex min-h-0 flex-1 flex-col border-t border-l border-[#a0a0a0]">
        <table className="w-full table-fixed border-separate border-spacing-0 bg-white">
          <thead className="bg-[#f0f0f0]">
            <tr>
              <th className="h-5 w-[150px] border-r border-b border-[#a0a0a0] p-0">
                <div className="flex justify-between px-2">
                  <button aria-label="Previous"><BlueArrow /></button>
                  <button aria-label="Next"><BlueArrow flip /></button>
                </div>
              </th>
              <th className="w-[18px] border-r border-b border-[#a0a0a0] p-0" />
              <th className="border-b border-[#a0a0a0] p-0" />
            </tr>
          </thead>
          <tbody>
            {nodes.map((n, i) => (
              <tr key={i}>
                <td className="h-[17px] border-r border-b border-[#c0c0c0] p-0">
                  <div className="flex h-4 items-center leading-4 whitespace-nowrap">
                    {n.level === 1 ? (
                      <span className="w-[39px] shrink-0 pl-3">
                        {n.open && (
                          <button aria-label="Collapse" className="flex size-3 items-center justify-center border border-[#b0b0b0]">
                            <span className="h-px w-[6px] bg-black" />
                          </button>
                        )}
                      </span>
                    ) : (
                      <span className="mr-[11px] ml-[45px] h-4 w-[9px] shrink-0">
                        <span className="block h-2 border-b border-l border-[#c0c0c0]" />
                        {!n.last && <span className="block h-2 border-l border-[#c0c0c0]" />}
                      </span>
                    )}
                    <NodeIcon kind={n.kind} />
                    <span className={`${n.level === 1 ? 'ml-1' : 'ml-[5px]'} ${n.kind === 'stock' ? 'text-[#909090]' : ''}`}>{n.label}</span>
                  </div>
                </td>
                <td className="border-r border-b border-[#c0c0c0] p-0"><Lamp state={n.lamp} /></td>
                <td className="border-b border-[#c0c0c0] p-0 pl-px">
                  {n.swatch && <div className={`h-[15px] border border-r-0 border-black ${n.swatch}`} />}
                </td>
              </tr>
            ))}
          </tbody>
        </table>
        <div className="flex-1 bg-white" />
        <HScroll thumb="w-full" />
      </div>
    </div>
  </section>
);

const statusCells = [
  { label: '编辑程序', width: 'w-[202px]' },
  { label: '块', width: 'w-[97px]' },
  { label: 'X', width: 'w-[72px]' },
  { label: 'Y', width: 'w-[72px]' },
  { label: 'Z', width: 'w-[72px]' },
  { label: 'CAP', width: 'w-[31px] text-[#909090]' },
  { label: 'NUM', width: 'w-[39px]' },
  { label: 'SCRL', width: 'w-[37px] text-[#909090]' },
];

const StatusBar = () => (
  <footer className="flex h-5 shrink-0 justify-end gap-[2px] pt-px pb-px">
    {statusCells.map(c => (
      <span key={c.label} className={`border border-t-[#a0a0a0] border-l-[#a0a0a0] border-r-white border-b-white pl-[2px] leading-[18px] ${c.width}`}>{c.label}</span>
    ))}
  </footer>
);

const Crescent = ({ className = 'size-4' }: { className?: string }) => (
  <svg viewBox="0 0 16 16" className={className} aria-hidden="true">
    <path d="M13 2Q6-1 3 4-1 10 5 14l4 1-2-5Q6 5 13 4z" fill="#c0e820" />
    <path d="M14 3Q6 2 6 8q0 5 6 8l2-3Q10 11 10 8q0-3 4-3z" fill="#f88020" />
  </svg>
);

const taskButton = 'flex h-7 items-center justify-center rounded-sm border border-[#4c6484] shadow-[inset_0_0_0_1px_rgba(255,255,255,0.5)]';

const TaskBar = () => (
  <footer className="relative flex h-[30px] shrink-0 items-center border-t border-[#404c5c] bg-[linear-gradient(to_right,#8093aa_0,#8093aa_50px,#a8c0dc_95px,#a8c0dc_570px,#8093aa_620px)]">
    <button aria-label="Start" className="relative -mt-[6px] ml-[9px] h-9 w-9 shrink-0 self-start">
      <svg viewBox="0 0 36 36" className="size-9">
        <defs>
          <radialGradient id="orb" cx="50%" cy="95%" r="85%">
            <stop offset="0" stopColor="#20d0ff" />
            <stop offset="0.5" stopColor="#105890" />
            <stop offset="1" stopColor="#7890a8" />
          </radialGradient>
        </defs>
        <circle cx="18" cy="18" r="17.500" fill="url(#orb)" stroke="#204058" />
        <path d="M10 9q4-3 7 0l-2 8q-4-3-7 0z" fill="#f06830" />
        <path d="M19 10q4 2 10 0l-2 8q-5 2-10 0z" fill="#98d040" />
        <path d="M8 19q4-3 7 0l-2 8q-4-3-7 0z" fill="#50a8f0" />
        <path d="M17 20q4 2 9 0l-2 8q-4 2-9 0z" fill="#ffd040" />
      </svg>
    </button>
    <button aria-label="Grid" className="ml-7 shrink-0">
      <svg viewBox="0 0 15 15" className="size-[15px]"><path d="M0 0h15v15H0z" fill="#f00000" /><path d="M4.500 0v15M10 0v15M0 5h15M0 10h15" stroke="#a8c0dc" strokeDasharray="1 1" /></svg>
    </button>
    <button aria-label="CimatronE" className="ml-[31px] shrink-0"><Crescent /></button>
    <button aria-label="CimatronE window" className={`${taskButton} ml-4 w-[43px] bg-gradient-to-b from-[#f0f4f8] to-[#c8d8ec]`}><Crescent /></button>
    <button aria-label="Explorer" className={`${taskButton} ml-[3px] w-[43px] bg-[#b4c8e0]`}>
      <svg viewBox="0 0 16 16" className="size-4"><path d="M0 2h6l1 2h8v9H0z" fill="#f4e090" stroke="#c0a050" /><path d="M2 15V9q6-4 12 0v6h-3v-4H5v4z" fill="#60b8e8" /></svg>
    </button>
    <button aria-label="Browser" className={`${taskButton} ml-[3px] w-[35px] bg-[#b4c8e0]`}>
      <svg viewBox="0 0 16 16" className="size-4"><circle cx="8" cy="8" r="7" fill="#20a040" /><path d="M4 8h8q0-4-4-4T4 8t4 4h3" fill="none" stroke="#fff" strokeWidth="2" /></svg>
    </button>
    <span className="h-7 w-1 rounded-sm border-r border-[#4c6484]" />
    <span className="h-7 w-1 rounded-sm border-r border-[#4c6484]" />
    <button aria-label="Paint" className={`${taskButton} ml-[3px] w-[43px] bg-[#b4c8e0]`}>
      <svg viewBox="0 0 16 16" className="size-4">
        <ellipse cx="7" cy="10" rx="6.500" ry="5" fill="#e8f4fc" stroke="#4088b0" />
        <circle cx="4" cy="9" r="1.500" fill="#30a0e0" /><circle cx="8" cy="8" r="1.500" fill="#40b040" /><circle cx="7" cy="12" r="1.500" fill="#f06020" />
        <path d="M13 15l-1-8 3-6 1 6-2 8z" fill="#e08030" />
      </svg>
    </button>
    <div className="relative ml-auto flex h-full shrink-0 items-center">
      <svg viewBox="0 0 16 14" className="h-[14px] w-4"><path d="M.5 5.500h15v7H.5z" fill="#e0e0e0" stroke="#555" /><path d="M2 8h12M2 10.500h12" stroke="#555" strokeDasharray="1 1" /><path d="M4 4l4-2 3 0 3-2" fill="none" stroke="#555" /></svg>
      <svg viewBox="0 0 16 16" className="ml-[6px] size-4"><circle cx="8" cy="8" r="7" fill="#0010a8" stroke="#ddd" /><text x="5" y="12" fontSize="11" fontWeight="bold" fill="#fff" fontFamily="Liberation Sans">?</text></svg>
      <div className="ml-[9px] flex w-[10px] flex-col items-center gap-1 self-start pt-[2px]">
        <svg viewBox="0 0 9 7" className="h-[7px] w-[9px]"><path d="M2.500.500h6v4h-6zM.5 2.500h5v4h-5z" fill="#8093aa" stroke="#fff" /></svg>
        <Arrow color="#fff" />
      </div>
      <div className="ml-[126px] flex w-[206px] items-center gap-3 pl-[30px]">
        <span className="size-4 rounded-full bg-[#2080e0]" />
        <span className="size-4 bg-[#2060c0]" />
        <span className="h-4 w-4 rounded-full bg-[#70b030]" />
        <span className="size-4 border border-white bg-[#8093aa]" />
        <span className="size-4 border border-white bg-[#8093aa]" />
      </div>
      <span className="absolute top-[6px] right-[18px] text-right font-['DejaVu_Sans','Noto_Sans_CJK_SC',sans-serif] text-[18px] leading-5 whitespace-nowrap text-white [-webkit-text-stroke:3px_#f03030] [paint-order:stroke_fill]">
        三维网www.3dportal.cn
      </span>
      <button aria-label="Show desktop" className="h-7 w-[14px] border border-[#405064] bg-gradient-to-b from-[#a0b0c4] to-[#64788c]" />
    </div>
  </footer>
);

const menus = ['文件', '编辑', '查看', '基准', '曲线', '曲面', 'NC程序', 'NC工具', '工具', '分析', '窗口', '帮助'];

const TitleBar = () => (
  <header className="flex h-[22px] shrink-0 items-center border-t-2 border-[#303030] bg-gradient-to-b from-[#92b0d0] to-[#b8d0ea] pl-[3px]">
    <Crescent />
    <h1 className="ml-[7px] flex-1 text-[13px] leading-5 whitespace-nowrap">CimatronE 10.0 - Official - [零件0_NC : NC-Standard]</h1>
    <div className="mr-[2px] flex gap-[2px]">
      <button aria-label="Minimize" className="flex h-[17px] w-[31px] items-center justify-center rounded-sm border border-[#506480] bg-gradient-to-b from-[#c8d8e8] to-[#98b0cc]">
        <span className="h-1 w-[11px] border border-[#505860] bg-white" />
      </button>
      <button aria-label="Restore" className="flex h-[17px] w-[31px] items-center justify-center rounded-sm border border-[#506480] bg-gradient-to-b from-[#c8d8e8] to-[#98b0cc]">
        <svg viewBox="0 0 12 11" className="h-[11px] w-3"><path d="M4 1h7v6H4zM1 4h7v6H1z" fill="#fff" stroke="#505860" /><path d="M3.500 6.500h2v1h-2z" stroke="#505860" /></svg>
      </button>
      <button aria-label="Close" className="flex h-[17px] w-[31px] items-center justify-center rounded-sm border border-[#501818] bg-gradient-to-b from-[#e0a090] via-[#c04830] to-[#d07058]">
        <svg viewBox="0 0 12 10" className="h-[10px] w-3"><path d="M2 1l8 8M10 1L2 9" stroke="#504040" strokeWidth="4" /><path d="M2 1l8 8M10 1L2 9" stroke="#fff" strokeWidth="2.500" /></svg>
      </button>
    </div>
  </header>
);

const MenuBar = () => (
  <nav className="flex h-[27px] shrink-0 items-center pr-[6px]">
    <span className="mr-[2px] ml-1 h-5 w-[2px] border-r border-[#a0a0a0] bg-white" />
    {menus.map(m => <button key={m} className="shrink-0 px-2 whitespace-nowrap">{m}</button>)}
    <div className="ml-auto flex gap-2">
      <button aria-label="Minimize document"><svg viewBox="0 0 9 9" className="size-[9px]"><path d="M1 8h6" stroke="#000" strokeWidth="2" /></svg></button>
      <button aria-label="Restore document"><svg viewBox="0 0 9 9" className="size-[9px]"><path d="M2.500 2.500V1h6v4.500H7M.5 4h6v4.500h-6z" fill="none" stroke="#000" strokeWidth="1.500" /></svg></button>
      <button aria-label="Close document"><svg viewBox="0 0 9 9" className="size-[9px]"><path d="M1 1l7 7M8 1L1 8" stroke="#000" strokeWidth="2.500" /></svg></button>
    </div>
  </nav>
);

export default function App() {
  return (
    <div className="flex h-screen flex-col overflow-hidden bg-[#f0f0f0] font-['Noto_Sans','Noto_Sans_CJK_SC',sans-serif] text-xs text-black">
      <TitleBar />
      <MenuBar />
      <ToolBar groups={topBar} />
      <ToolBar groups={lowBar} />
      <div className="flex min-h-0 flex-1">
        <SideBar />
        <Wizard />
        <Viewport />
        <DrillPanel />
      </div>
      <StatusBar />
      <TaskBar />
    </div>
  );
}
